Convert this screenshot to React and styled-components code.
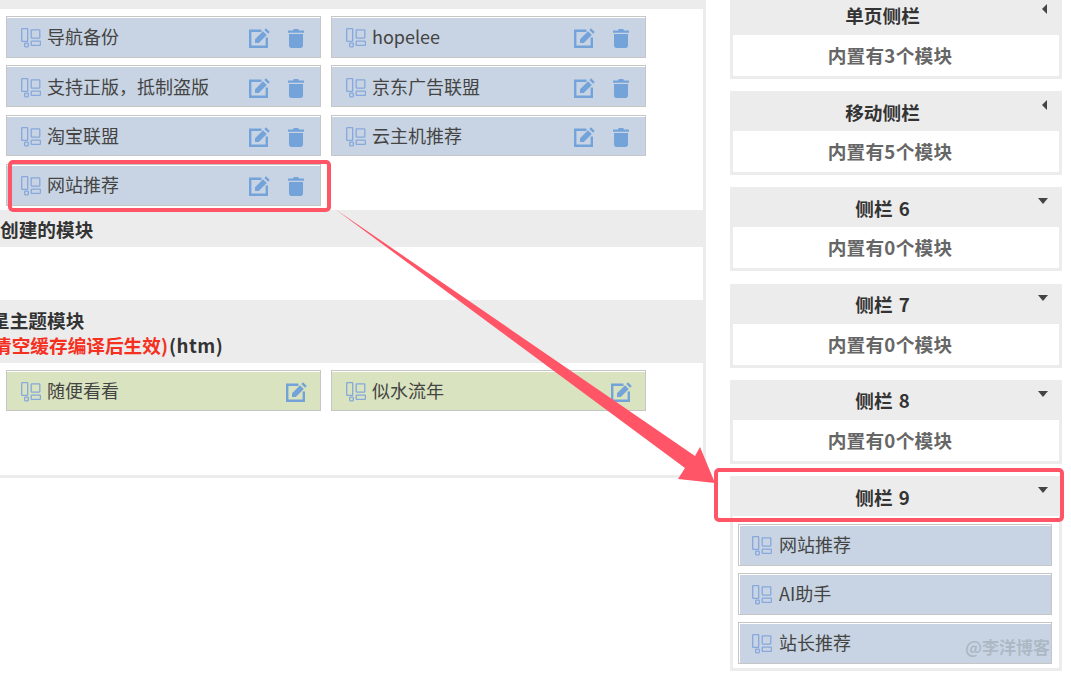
import React from "react";
import styled, { createGlobalStyle } from "styled-components";

const Global = createGlobalStyle`
  html, body { margin: 0; padding: 0; background: #fff; height: 675px; overflow: hidden; }
  * { box-sizing: border-box; }
  body { font-family: "Noto Sans CJK SC", "Noto Sans", sans-serif; color: #333; }
`;

const Page = styled.div`
  position: relative;
  display: flex;
  width: 1071px;
  height: 675px;
  overflow: hidden;
  background: #fff;
`;

const Main = styled.main`
  width: 706px;
  height: 478px;
  flex: none;
  border-right: 3px solid #ececec;
  border-bottom: 3px solid #ececec;
`;

const TopStrip = styled.div`
  height: 9px;
  background: #ececec;
  overflow: hidden;
  padding-left: 4px;
  font-size: 18.67px;
  font-weight: 700;
  line-height: 25px;
  margin-bottom: 7px;
  & > span { display: block; margin-top: -24px; color: #555; }
`;

const ModuleGrid = styled.div`
  display: grid;
  grid-template-columns: 315px 315px;
  column-gap: 10px;
  row-gap: 7.5px;
  padding-left: 6px;
  margin-bottom: ${(p) => p.$bottom || 0}px;
`;

const Module = styled.div`
  display: flex;
  align-items: center;
  height: 41.8px;
  padding: 0 16px 0 14px;
  background: ${(p) => (p.$green ? "#d9e3bf" : "#c8d4e3")};
  border: 1px solid #c6c6c6;
  box-shadow: inset 0 1px 0 #fff;
  font-size: 18px;
  color: #444;
`;

const ModuleName = styled.span`
  margin-left: ${(p) => p.$gap || 6}px;
  line-height: 26px;
  margin-top: -1px;
`;

const Actions = styled.div`
  margin-left: auto;
  display: flex;
  align-items: center;
  gap: 18px;
  margin-right: ${(p) => (p.$single ? -3 : 0)}px;
  margin-top: 3px;
`;

const SectionHead = styled.div`
  background: #ececec;
  font-size: 18.67px;
  font-weight: 700;
  line-height: 25px;
  color: #333;
  padding: ${(p) => (p.$tall ? "7px 0 6px" : "6px 0")};
  margin-bottom: ${(p) => p.$bottom || 0}px;
  white-space: nowrap;
`;

const ClippedLine = styled.div`
  margin-left: ${(p) => p.$shift}px;
`;

const Red = styled.span`
  color: #f5301f;
`;

const Ext = styled.span`
  margin-left: 1px;
  letter-spacing: 0.5px;
`;

const Spacer = styled.div`
  height: 53px;
`;

const Side = styled.aside`
  width: 332px;
  margin: -5.3px 0 0 24px;
  flex: none;
  display: flex;
  flex-direction: column;
  gap: 12.3px;
`;

const Group = styled.section`
  background: #ececec;
  padding: 0 3px 3px;
`;

const GroupHead = styled.div`
  position: relative;
  height: 40px;
  margin: 0 -3px;
  padding: 2.6px 27px 0 0;
  text-align: center;
  font-size: 18.67px;
  font-weight: 700;
  line-height: 36px;
  word-spacing: 2px;
  color: #333;
`;

const Caret = styled.i`
  position: absolute;
  ${(p) =>
    p.$open
      ? `top: 11px; right: 14px; border-left: 5px solid transparent; border-right: 5px solid transparent; border-top: 6px solid #444;`
      : `top: 9px; right: 15px; border-top: 5px solid transparent; border-bottom: 5px solid transparent; border-right: 5.5px solid #444;`}
`;

const GroupBody = styled.div`
  height: 41px;
  background: #fff;
  padding-right: 12px;
  text-align: center;
  font-size: 18.67px;
  font-weight: 700;
  line-height: 39px;
  letter-spacing: 0.25px;
  color: #666;
`;

const SlotList = styled.div`
  position: relative;
  background: #fff;
  display: flex;
  flex-direction: column;
  gap: 7.5px;
  padding: 8px 7px 4px 5px;
`;

const Slot = styled.div`
  display: flex;
  align-items: center;
  height: 41.5px;
  padding-left: 13px;
  background: #c8d4e3;
  border: 1px solid #c6c6c6;
  box-shadow: inset 1px 1px 0 #fff;
  font-size: 18px;
  color: #444;
`;

const Watermark = styled.span`
  position: absolute;
  right: 9px;
  bottom: 10px;
  font-size: 17px;
  font-weight: 700;
  line-height: 22px;
  color: rgba(140, 150, 160, 0.45);
`;

const Highlight = styled.div`
  position: absolute;
  left: ${(p) => p.$x}px;
  top: ${(p) => p.$y}px;
  width: ${(p) => p.$w}px;
  height: ${(p) => p.$h}px;
  border: 4.5px solid #ff5567;
  border-radius: 5px;
  pointer-events: none;
`;

const ArrowLayer = styled.svg`
  position: absolute;
  left: 0;
  top: 0;
  pointer-events: none;
`;

const Drag = () => (
  <svg width="20" height="20" viewBox="0 0 20 20" fill="none" stroke="#86a8dc" strokeWidth="1.3" style={{ flex: "none", marginTop: 3 }}>
    <rect x=".7" y=".7" width="6" height="12.6" rx=".6" />
    <rect x="3.7" y="15.2" width="3.6" height="3.6" rx=".5" />
    <rect x="10.2" y="1.9" width="8.6" height="8.2" rx=".5" />
    <rect x="10.2" y="13.2" width="9.2" height="4.2" rx=".5" />
  </svg>
);

const Edit = () => (
  <svg width="21" height="20" viewBox="0 0 21 20" style={{ display: "block" }}>
    <path d="M12.5 2.8H1.2v15.9h16.6V9.5" fill="none" stroke="#74a3da" strokeWidth="2.4" />
    <path d="M6 11.2 14 3.2l3.8 3.8-8 8H6z M15.3 1.9 17 .2l3.8 3.8-1.7 1.7z" fill="#74a3da" />
  </svg>
);

const Trash = () => (
  <svg width="16" height="20" viewBox="0 0 16 20" style={{ display: "block" }}>
    <path d="M0 2.6h5L5.8 1h4.4l.8 1.6h5v2.2H0z M1 6h14v11.6c0 1.4-1 2.4-2.4 2.4H3.4C2 20 1 19 1 17.6z" fill="#74a3da" />
  </svg>
);

const items = ["导航备份", "hopelee", "支持正版，抵制盗版", "京东广告联盟", "淘宝联盟", "云主机推荐", "网站推荐"];
const groups = [
  ["单页侧栏", 3, false],
  ["移动侧栏", 5, false],
  ["侧栏 6", 0, true],
  ["侧栏 7", 0, true],
  ["侧栏 8", 0, true],
];
const slots = ["网站推荐", "AI助手", "站长推荐"];

export default function App() {
  return (
    <Page>
      <Global />
      <Main>
        <TopStrip>
          <span>全局通用模块</span>
        </TopStrip>
        <ModuleGrid $bottom={4}>
          {items.map((name) => (
            <Module key={name}>
              <Drag />
              <ModuleName>{name}</ModuleName>
              <Actions>
                <Edit />
                <Trash />
              </Actions>
            </Module>
          ))}
        </ModuleGrid>
        <SectionHead>创建的模块</SectionHead>
        <Spacer />
        <SectionHead $tall $bottom={7}>
          <ClippedLine $shift={-9}>星主题模块</ClippedLine>
          <ClippedLine $shift={-7}>
            <Red>清空缓存编译后生效)</Red>
            <Ext>(htm)</Ext>
          </ClippedLine>
        </SectionHead>
        <ModuleGrid>
          {["随便看看", "似水流年"].map((name) => (
            <Module key={name} $green>
              <Drag />
              <ModuleName>{name}</ModuleName>
              <Actions $single>
                <Edit />
              </Actions>
            </Module>
          ))}
        </ModuleGrid>
      </Main>
      <Side>
        {groups.map(([title, count, open]) => (
          <Group key={title}>
            <GroupHead>
              {title}
              <Caret $open={open} />
            </GroupHead>
            <GroupBody>内置有{count}个模块</GroupBody>
          </Group>
        ))}
        <Group>
          <GroupHead>
            侧栏 9
            <Caret $open />
          </GroupHead>
          <SlotList>
            {slots.map((name) => (
              <Slot key={name}>
                <Drag />
                <ModuleName $gap={7}>{name}</ModuleName>
              </Slot>
            ))}
            <Watermark>@李洋博客</Watermark>
          </SlotList>
        </Group>
      </Side>
      <Highlight $x={8} $y={159.5} $w={323} $h={52.5} />
      <Highlight $x={714} $y={468} $w={350} $h={54} />
      <ArrowLayer width="1071" height="675" viewBox="0 0 1071 675">
        <polygon points="335,209 695,456 700,447 715,483 678,479 685,468" fill="#ff5567" />
      </ArrowLayer>
    </Page>
  );
}
